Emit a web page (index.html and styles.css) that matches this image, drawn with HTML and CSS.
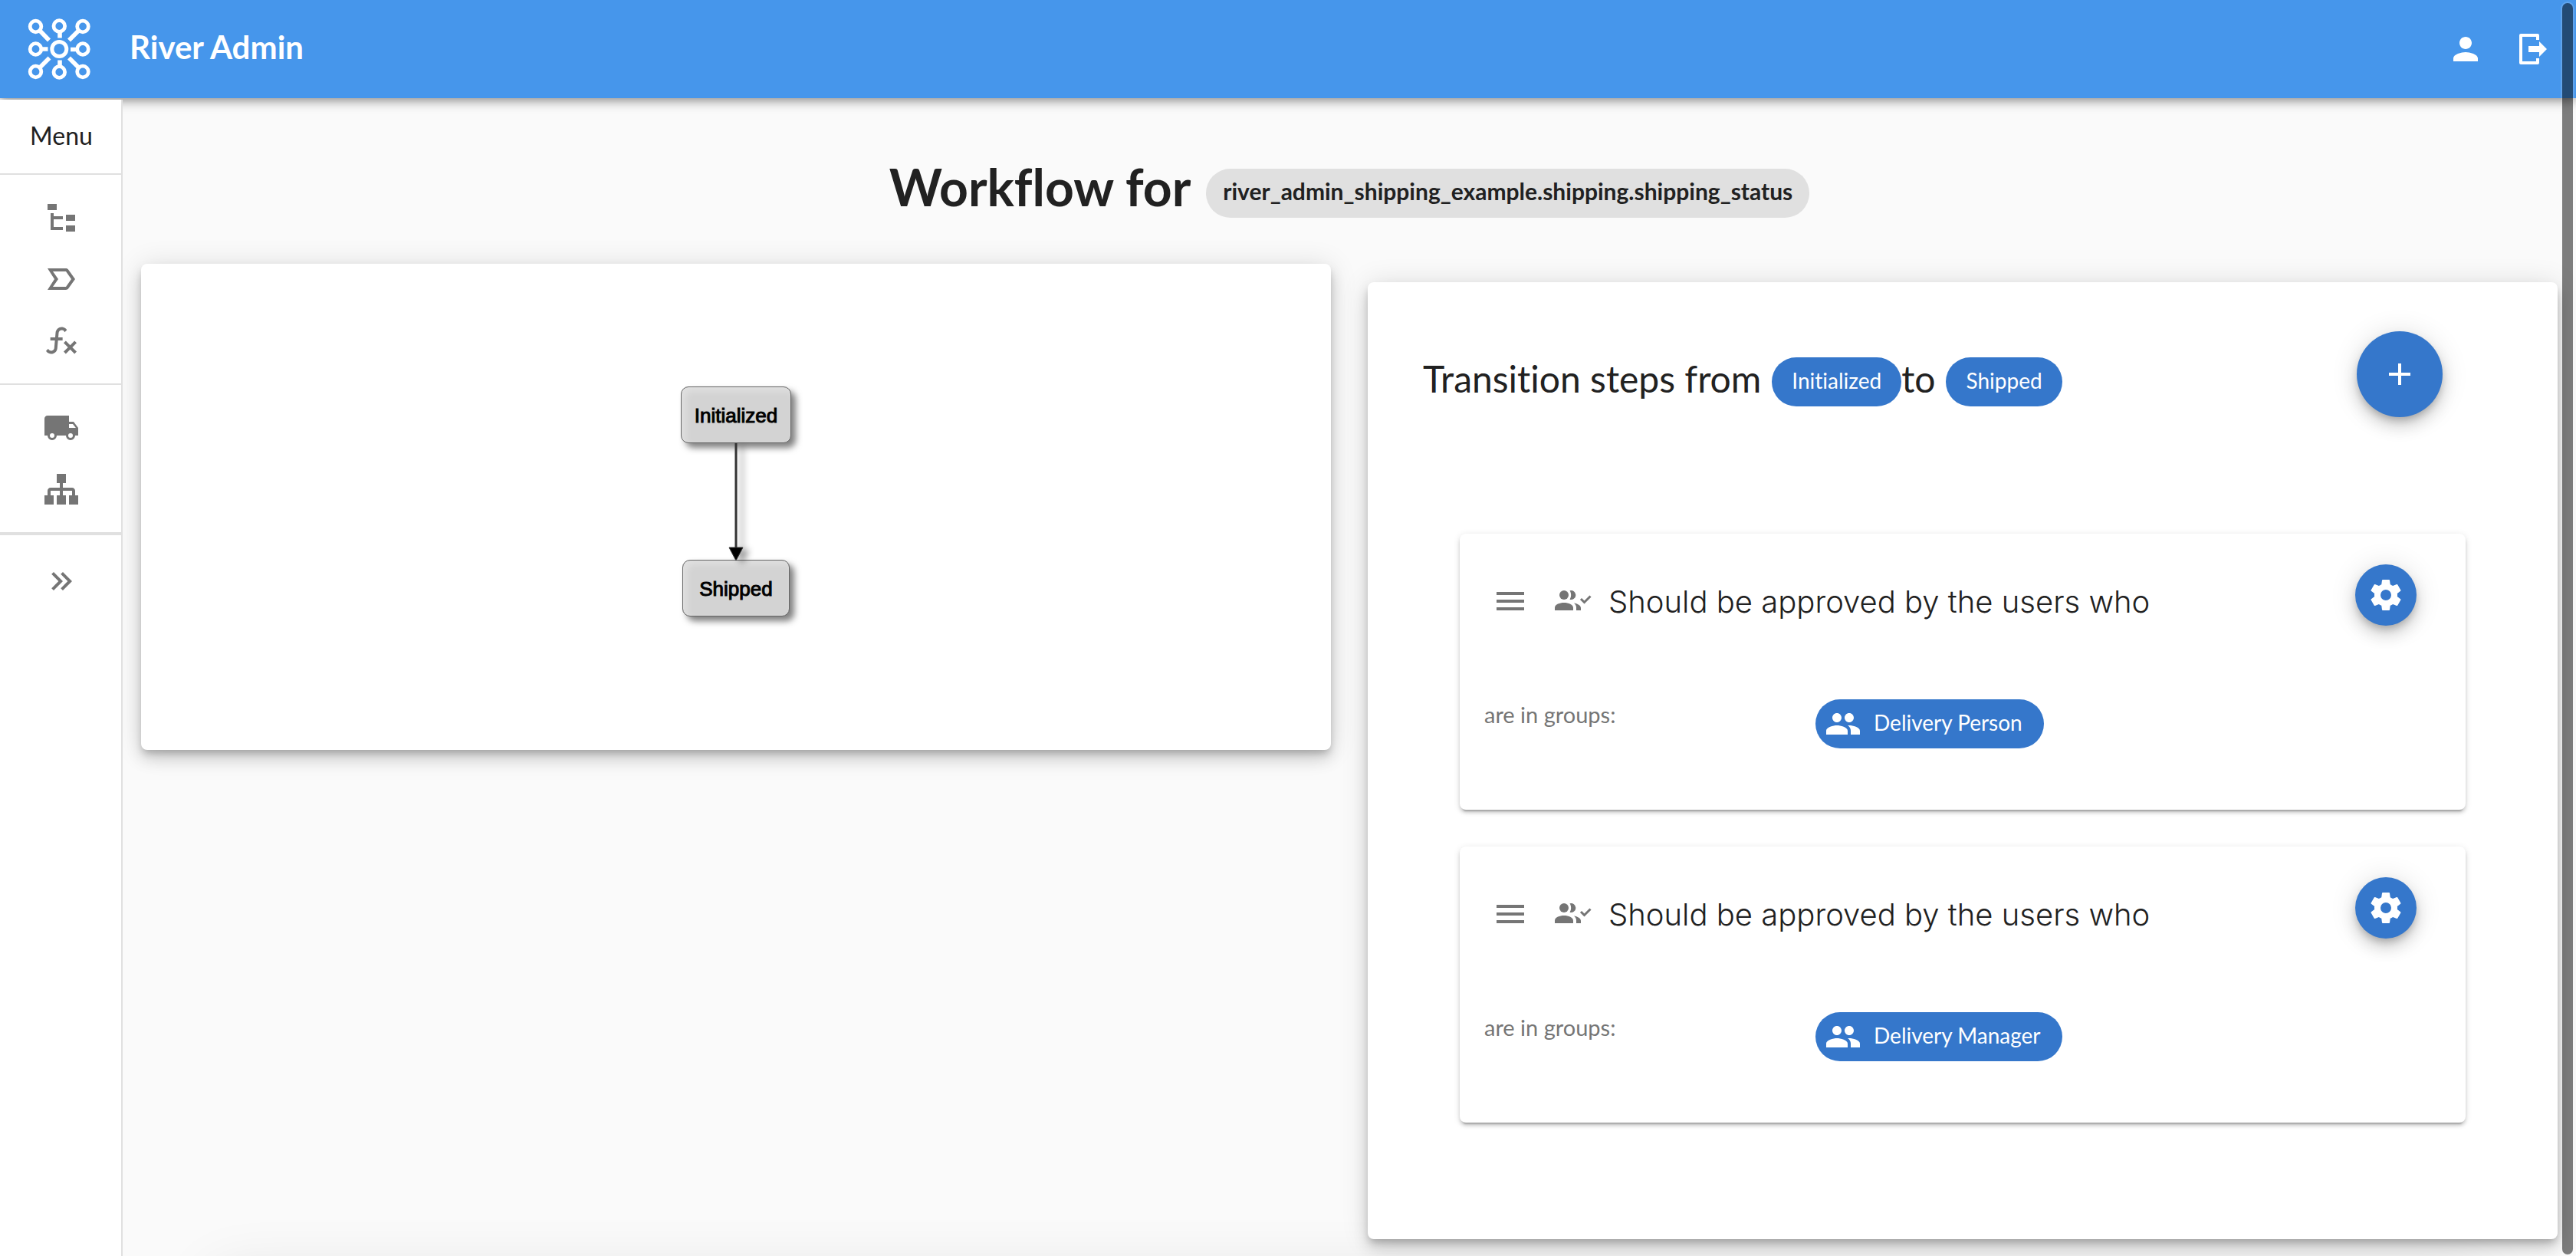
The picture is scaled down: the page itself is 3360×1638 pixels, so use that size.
FILE: index.html
```html
<!DOCTYPE html>
<html lang="en">
<head>
  <meta charset="utf-8">
  <meta name="viewport" content="width=device-width, initial-scale=1">
  <title>River Admin</title>
  <link rel="stylesheet" href="styles.css">
</head>
<body>
  <svg class="sprite" aria-hidden="true">
    <symbol id="i-cog" viewBox="0 0 24 24"><path d="M12,15.5A3.5,3.5 0 0,1 8.5,12A3.5,3.5 0 0,1 12,8.5A3.5,3.5 0 0,1 15.5,12A3.5,3.5 0 0,1 12,15.5M19.43,12.97C19.47,12.65 19.5,12.33 19.5,12C19.5,11.67 19.47,11.34 19.43,11L21.54,9.37C21.73,9.22 21.78,8.95 21.66,8.73L19.66,5.27C19.54,5.05 19.27,4.96 19.05,5.05L16.56,6.05C16.04,5.66 15.5,5.32 14.87,5.07L14.5,2.42C14.46,2.18 14.25,2 14,2H10C9.75,2 9.54,2.18 9.5,2.42L9.13,5.07C8.5,5.32 7.96,5.66 7.44,6.05L4.95,5.05C4.73,4.96 4.46,5.05 4.34,5.27L2.34,8.73C2.21,8.95 2.27,9.22 2.46,9.37L4.57,11C4.53,11.34 4.5,11.67 4.5,12C4.5,12.33 4.53,12.65 4.57,12.97L2.46,14.63C2.27,14.78 2.21,15.05 2.34,15.27L4.34,18.73C4.46,18.95 4.73,19.03 4.95,18.95L7.44,17.94C7.96,18.34 8.5,18.68 9.13,18.93L9.5,21.58C9.54,21.82 9.75,22 10,22H14C14.25,22 14.46,21.82 14.5,21.58L14.87,18.93C15.5,18.67 16.04,18.34 16.56,17.94L19.05,18.95C19.27,19.03 19.54,18.95 19.66,18.73L21.66,15.27C21.78,15.05 21.73,14.78 21.54,14.63L19.43,12.97Z"/></symbol>
    <symbol id="i-people" viewBox="0 0 24 24"><path d="M16 11c1.66 0 2.99-1.34 2.99-3S17.66 5 16 5c-1.66 0-3 1.34-3 3s1.34 3 3 3zm-8 0c1.66 0 2.99-1.34 2.99-3S9.66 5 8 5C6.34 5 5 6.34 5 8s1.34 3 3 3zm0 2c-2.33 0-7 1.17-7 3.5V19h14v-2.5c0-2.33-4.67-3.5-7-3.5zm8 0c-.29 0-.62.02-.97.05 1.16.84 1.97 1.97 1.97 3.45V19h6v-2.5c0-2.33-4.67-3.5-7-3.5z"/></symbol>
    <symbol id="i-burger" viewBox="0 0 24 24"><path d="M3 6h18v2H3zM3 11h18v2H3zM3 16h18v2H3z"/></symbol>
    <symbol id="i-people-check" viewBox="0 0 48 48">
      <circle cx="12" cy="16" r="6"/>
      <path d="M0 36v-3.500c0-4 6-6.500 12-6.500s12 2.500 12 6.500V36zM19.500 10.300a6 6 0 1 1 0 11.400c2.200-3.400 2.200-8 0-11.400zM25 26.400c4.500.8 9 3 9 6.400V36h-6v-3.500c0-2.500-1-4.500-3-6.100z"/>
      <path d="M34 21l4.500 4.500L46.500 17.500" fill="none" stroke="currentColor" stroke-width="3"/>
    </symbol>
  </svg>

  <header class="topbar">
    <a class="brand" href="#">
      <svg class="logo" viewBox="0 0 84 80" aria-hidden="true">
        <g fill="none" stroke="#fff">
          <circle cx="42.300" cy="40" r="9.500" stroke-width="5"/>
          <g stroke-width="4.800">
            <circle cx="11.500" cy="10.500" r="7.300"/><circle cx="42.300" cy="10" r="7.300"/><circle cx="73" cy="10.500" r="7.300"/>
            <circle cx="11.500" cy="40" r="7.300"/><circle cx="73" cy="40" r="7.300"/>
            <circle cx="11.500" cy="69.500" r="7.300"/><circle cx="42.300" cy="70" r="7.300"/><circle cx="73" cy="69.500" r="7.300"/>
          </g>
          <g stroke-width="5.600">
            <path d="M17 16L29 28.500M67.500 16L55 28.500M17 64L29.500 51.500M67.500 64L55 51.500M43 17V25.500M43 54.500V63M19 40H27.500M57 40.500H66"/>
          </g>
        </g>
      </svg>
      <span class="brand-name">River Admin</span>
    </a>
    <div class="topbar-actions">
      <button class="icon-button" type="button" aria-label="Account">
        <svg class="icon" viewBox="0 0 24 24"><path d="M12 12c2.210 0 4-1.790 4-4s-1.790-4-4-4-4 1.790-4 4 1.790 4 4 4zm0 2c-2.670 0-8 1.340-8 4v2h16v-2c0-2.660-5.330-4-8-4z"/></svg>
      </button>
      <button class="icon-button" type="button" aria-label="Log out">
        <svg class="icon" viewBox="0 0 48 48"><path d="M30 12V6H8V42H30V36" fill="none" stroke="currentColor" stroke-width="4" stroke-linejoin="round"/><path d="M18 20H32V14L42 24L32 34V28H18z"/></svg>
      </button>
    </div>
  </header>

  <div class="shell">
    <nav class="sidebar" aria-label="Menu">
      <div class="menu-title">Menu</div>
      <div class="menu-group">
        <a class="menu-item" href="#" aria-label="Workflows"><svg class="icon" viewBox="0 0 24 24"><path d="M3,3H9V7H3V3M15,10H21V14H15V10M15,17H21V21H15V17M13,13H7V18H13V20H5V9H7V11H13V13Z"/></svg></a>
        <a class="menu-item" href="#" aria-label="States"><svg class="icon" viewBox="0 0 24 24"><path d="M15 19H3l4.500-7L3 5h12c.65 0 1.260.31 1.630.84L21 12l-4.370 6.160c-.37.52-.98.84-1.630.84zm-8.500-2H15l3.500-5L15 7H6.500l3.500 5-3.500 5z"/></svg></a>
        <a class="menu-item" href="#" aria-label="Functions"><svg class="icon" viewBox="0 0 24 24"><path d="M12.420,5.290C11.320,5.190 10.350,6 10.250,7.110L10,10H12.820V12H9.820L9.380,17.070C9.180,19.270 7.240,20.900 5.040,20.700C3.790,20.590 2.660,19.900 2,18.830L3.500,17.330C3.830,18.380 4.960,18.970 6,18.630C6.780,18.390 7.330,17.700 7.400,16.890L7.820,12H4.820V10H8L8.270,6.930C8.460,4.730 10.390,3.100 12.600,3.280C13.860,3.390 15,4.090 15.660,5.170L14.160,6.670C13.910,5.900 13.230,5.360 12.420,5.290M22,13.650L20.590,12.240L17.760,15.070L14.930,12.240L13.500,13.650L16.350,16.500L13.500,19.310L14.930,20.720L17.760,17.890L20.590,20.720L22,19.310L19.170,16.500L22,13.650Z"/></svg></a>
      </div>
      <div class="menu-group">
        <a class="menu-item" href="#" aria-label="Shipping"><svg class="icon" viewBox="0 0 24 24"><path d="M18,18.5A1.5,1.5 0 0,1 16.5,17A1.5,1.5 0 0,1 18,15.5A1.5,1.5 0 0,1 19.5,17A1.5,1.5 0 0,1 18,18.5M19.5,9.5L21.46,12H17V9.5M6,18.5A1.5,1.5 0 0,1 4.5,17A1.5,1.5 0 0,1 6,15.5A1.5,1.5 0 0,1 7.5,17A1.5,1.5 0 0,1 6,18.5M20,8H17V4H3C1.89,4 1,4.89 1,6V17H3A3,3 0 0,0 6,20A3,3 0 0,0 9,17H15A3,3 0 0,0 18,20A3,3 0 0,0 21,17H23V12L20,8Z"/></svg></a>
        <a class="menu-item" href="#" aria-label="Hierarchy"><svg class="icon" viewBox="0 0 24 24"><path d="M9,2V8H11V11H5C3.890,11 3,11.890 3,13V16H1V22H7V16H5V13H11V16H9V22H15V16H13V13H19V16H17V22H23V16H21V13C21,11.890 20.110,11 19,11H13V8H15V2H9Z"/></svg></a>
      </div>
      <div class="menu-group menu-group-last">
        <button class="menu-item" type="button" aria-label="Expand menu"><svg class="icon" viewBox="0 0 24 24"><path d="M5.590,7.410L7,6L13,12L7,18L5.590,16.590L10.170,12L5.590,7.410M11.590,7.410L13,6L19,12L13,18L11.590,16.590L16.170,12L11.590,7.410Z"/></svg></button>
      </div>
    </nav>

    <main class="content">
      <h1 class="page-title">
        <span class="page-title-text">Workflow for</span>
        <span class="chip chip-neutral">river_admin_shipping_example.shipping.shipping_status</span>
      </h1>

      <div class="columns">
        <section class="card diagram" aria-label="Workflow diagram">
          <div class="node">Initialized</div>
          <svg class="edge" viewBox="0 0 40 152" aria-hidden="true"><path d="M20 0V140" stroke="#333" stroke-width="3"/><path d="M11 136H29L20 153z" stroke="#333" stroke-width="1"/></svg>
          <div class="node">Shipped</div>
        </section>

        <section class="card steps">
          <div class="steps-head">
            <h2 class="steps-title">
              <span class="steps-text">Transition steps from</span>
              <span class="chip chip-primary">Initialized</span>
              <span class="steps-text steps-to">to</span>
              <span class="chip chip-primary">Shipped</span>
            </h2>
            <button class="fab fab-large" type="button" aria-label="Add step"><svg class="icon" viewBox="0 0 24 24"><path d="M19 13h-6v6h-2v-6H5v-2h6V5h2v6h6v2z"/></svg></button>
          </div>

          <div class="step-list">
            <article class="step">
              <div class="step-head">
                <h3 class="step-title">
                  <svg class="icon"><use href="#i-burger"/></svg>
                  <svg class="icon step-people"><use href="#i-people-check"/></svg>
                  <span>Should be approved by the users who</span>
                </h3>
                <button class="fab" type="button" aria-label="Step settings"><svg class="icon"><use href="#i-cog"/></svg></button>
              </div>
              <div class="step-rule">
                <span class="rule-label">are in groups:</span>
                <span class="chip chip-primary chip-icon"><svg class="icon"><use href="#i-people"/></svg><span class="chip-text">Delivery Person</span></span>
              </div>
            </article>

            <article class="step">
              <div class="step-head">
                <h3 class="step-title">
                  <svg class="icon"><use href="#i-burger"/></svg>
                  <svg class="icon step-people"><use href="#i-people-check"/></svg>
                  <span>Should be approved by the users who</span>
                </h3>
                <button class="fab" type="button" aria-label="Step settings"><svg class="icon"><use href="#i-cog"/></svg></button>
              </div>
              <div class="step-rule">
                <span class="rule-label">are in groups:</span>
                <span class="chip chip-primary chip-icon"><svg class="icon"><use href="#i-people"/></svg><span class="chip-text">Delivery Manager</span></span>
              </div>
            </article>
          </div>
        </section>
      </div>

      <section class="card next-row" aria-hidden="true"></section>
    </main>
  </div>
  <div class="scroll-thumb" aria-hidden="true"></div>
</body>
</html>
```

FILE: styles.css
```css
:root {
  --text: #212121;
  --icon: #757575;
  --header: #4696eb;
  --primary: #3577cb;
  --line: #e0e0e0;
  --raised: 0 6px 10px -2px rgba(0, 0, 0, .2), 0 12px 20px 0 rgba(0, 0, 0, .14), 0 2px 36px 0 rgba(0, 0, 0, .12);
}

*, *::before, *::after { box-sizing: border-box; }

body {
  margin: 0;
  height: 100vh;
  overflow: hidden;
  display: flex;
  flex-direction: column;
  background: #fafafa;
  color: var(--text);
  font-family: Lato, "Liberation Sans", sans-serif;
  font-size: 28px;
  font-variant-ligatures: none;
}

h1, h2, h3 { margin: 0; font-weight: 400; }
button { border: 0; padding: 0; background: none; color: inherit; font: inherit; cursor: pointer; }
a { color: inherit; text-decoration: none; }

.sprite { position: absolute; width: 0; height: 0; }
.icon { display: block; flex: none; width: 48px; height: 48px; fill: currentColor; }

/* Top bar */
.topbar {
  position: relative;
  z-index: 2;
  flex: none;
  display: flex;
  align-items: center;
  justify-content: space-between;
  height: 128px;
  padding: 0 32px;
  background: var(--header);
  color: #fff;
  box-shadow: 0 4px 8px -2px rgba(0, 0, 0, .2), 0 8px 10px 0 rgba(0, 0, 0, .14), 0 2px 20px 0 rgba(0, 0, 0, .12);
}
.brand { display: flex; align-items: center; gap: 50px; }
.logo { display: block; width: 84px; height: 80px; margin-left: 3px; }
.brand-name { padding-bottom: 6px; font-size: 42px; font-weight: 700; }
.topbar-actions { display: flex; gap: 40px; }

/* Side menu */
.shell { flex: 1; display: flex; min-height: 0; }
.sidebar {
  position: relative;
  z-index: 3;
  flex: none;
  width: 160px;
  margin-top: 2px;
  background: #fff;
  box-shadow: inset -2px 0 var(--line);
}
.menu-title {
  display: flex;
  align-items: center;
  justify-content: center;
  height: 96px;
  padding-bottom: 4px;
  font-size: 32px;
}
.menu-group { padding: 16px 0; border-top: 2px solid var(--line); }
.menu-group-last { padding-top: 20px; border-top-width: 4px; }
.menu-item {
  display: flex;
  align-items: center;
  justify-content: center;
  width: 100%;
  height: 80px;
  color: var(--icon);
}

/* Page */
.content { flex: 1; min-width: 0; min-height: 0; overflow: hidden; padding: 84px 24px 0; }
.page-title {
  display: flex;
  align-items: flex-start;
  justify-content: center;
  gap: 20px;
  font-weight: 700;
}
.page-title-text { font-size: 66px; line-height: 64px; }
.page-title .chip { margin-top: 8px; }

.chip {
  display: inline-flex;
  align-items: center;
  height: 64px;
  padding: 0 26px 4px;
  border-radius: 32px;
  font-size: 28px;
  white-space: nowrap;
}
.chip-neutral { padding: 0 22px 6px; background: #e0e0e0; font-size: 30px; }
.chip-primary { background: var(--primary); color: #fff; }
.chip-icon { gap: 16px; padding: 0 28px 0 12px; }
.chip-text { padding-bottom: 4px; }

.columns {
  display: grid;
  grid-template-columns: 1fr 1fr;
  align-items: start;
  gap: 48px;
  margin-top: 60px;
}
.card { background: #fff; border-radius: 8px; box-shadow: var(--raised); }

/* Workflow diagram */
.diagram {
  display: flex;
  flex-direction: column;
  align-items: center;
  padding: 160px 24px 174px;
}
.node {
  display: flex;
  align-items: center;
  justify-content: center;
  min-width: 140px;
  height: 74px;
  padding: 2px 17px 0;
  border: 1px solid #666;
  border-radius: 10px;
  background: #d3d3d3;
  color: #000;
  font-family: "Liberation Sans", Arial, sans-serif;
  font-size: 26px;
  -webkit-text-stroke: 1px #000;
  box-shadow: 6px 6px 9px rgba(0, 0, 0, .5), inset 5px 5px 10px rgba(255, 255, 255, .3);
}
.edge {
  display: block;
  width: 40px;
  height: 152px;
  overflow: visible;
  filter: drop-shadow(8px 4px 4px rgba(0, 0, 0, .4));
}

/* Transition steps */
.steps { margin-top: 24px; padding: 64px 72px 152px; }
.steps-head { display: flex; align-items: center; justify-content: space-between; padding-right: 78px; }
.steps-title { display: flex; align-items: center; gap: 14px; padding-top: 20px; }
.steps-text { padding-bottom: 10px; font-size: 48px; white-space: nowrap; }
.steps-to { margin-left: -14px; }

.fab {
  display: flex;
  align-items: center;
  justify-content: center;
  flex: none;
  width: 80px;
  height: 80px;
  border-radius: 50%;
  background: var(--primary);
  color: #fff;
  box-shadow: var(--raised);
}
.fab-large { width: 112px; height: 112px; }

.step-list { display: flex; flex-direction: column; gap: 48px; margin: 152px 48px 0; }
.step {
  padding: 40px 64px 80px 32px;
  border-radius: 8px;
  background: #fff;
  box-shadow: 0 6px 2px -4px rgba(0, 0, 0, .2), 0 4px 4px 0 rgba(0, 0, 0, .14), 0 2px 10px 0 rgba(0, 0, 0, .12);
}
.step-head { display: flex; align-items: center; justify-content: space-between; }
.step-title {
  display: flex;
  align-items: center;
  padding: 16px 0 0 10px;
  font-family: Inter, "Liberation Sans", sans-serif;
  font-size: 40px;
  font-weight: 300;
}
.step-title .icon { color: var(--icon); }
.step-people { margin: 0 22px 0 34px; }
.step-rule { display: grid; grid-template-columns: 432px 1fr; margin-top: 96px; }
.step-rule .chip { justify-self: start; }
.rule-label { color: var(--icon); font-size: 29px; line-height: 40px; }

/* Next row starts just under the fold */
.next-row {
  height: 480px;
  margin: 48px 96px 0;
  box-shadow: 0 0 80px rgba(0, 0, 0, .12);
}

.scroll-thumb {
  position: fixed;
  z-index: 4;
  top: 4px;
  right: 4px;
  bottom: 2px;
  width: 14px;
  border-radius: 7px;
  background: rgba(0, 0, 0, .5);
  box-shadow: 0 0 0 2px rgba(255, 255, 255, .14);
}
```
